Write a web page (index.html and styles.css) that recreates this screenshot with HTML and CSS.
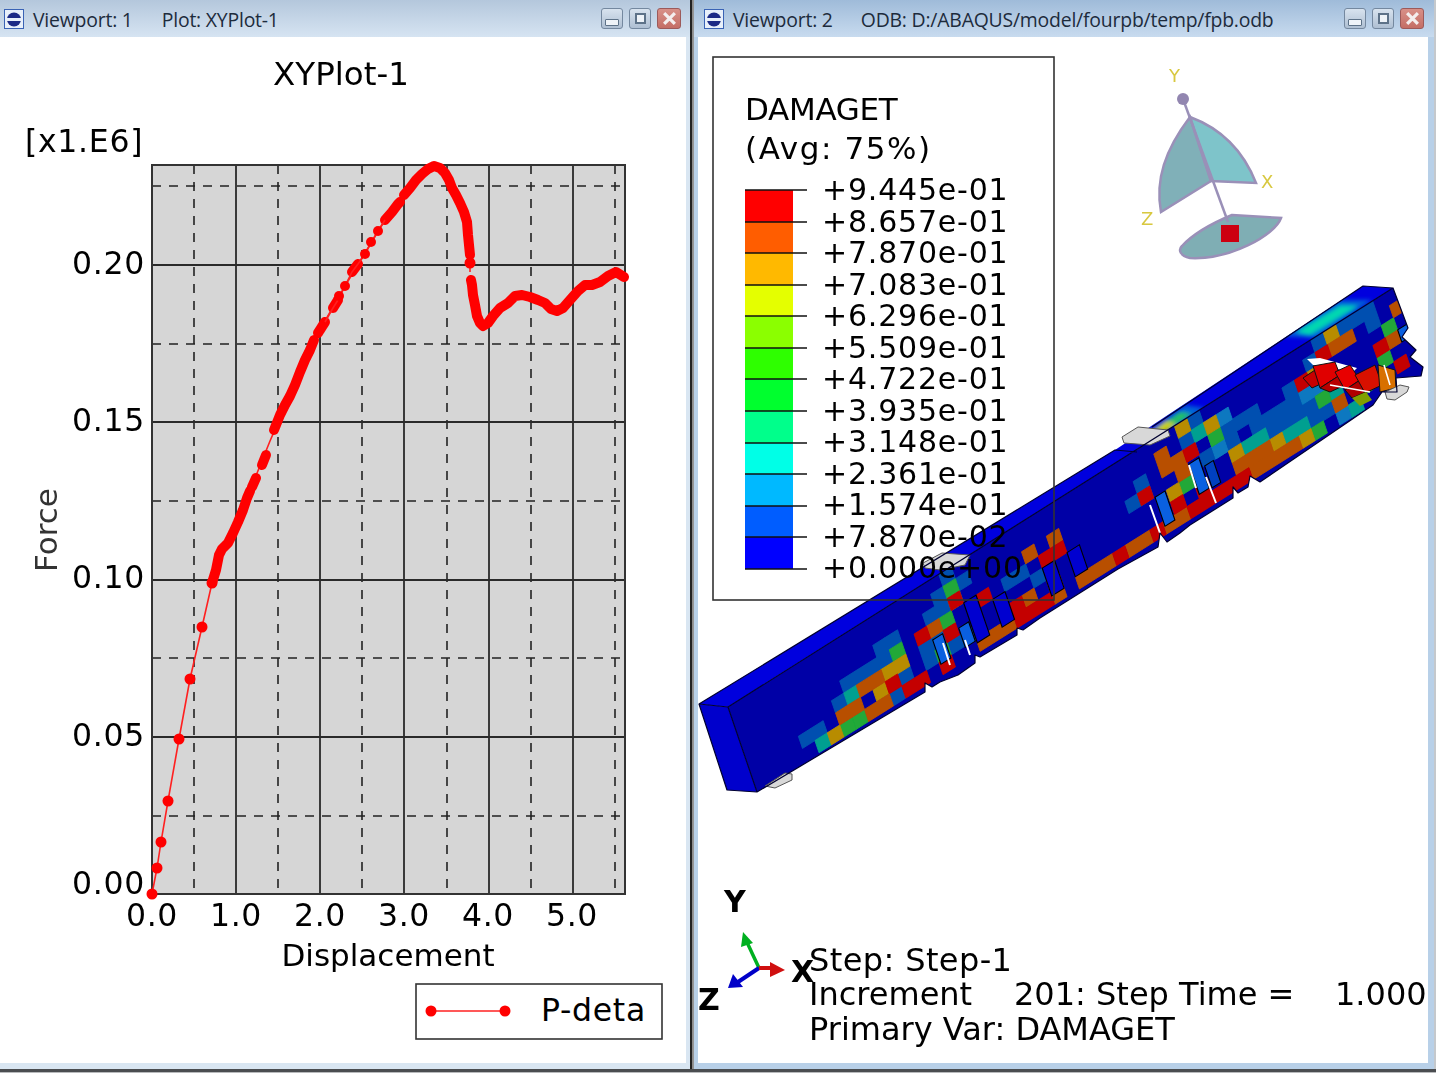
FILE: index.html
```html
<!DOCTYPE html>
<html lang="en">
<head>
<meta charset="utf-8">
<title>Viewports</title>
<link rel="stylesheet" href="styles.css">
</head>
<body>
<main class="desk">
  <section class="win win-one">
    <header class="titlebar">
      <svg class="appicon" viewBox="0 0 20 20"><rect x=".5" y=".5" width="19" height="19" fill="#e8f0fa" stroke="#3a63b5"/><circle cx="10" cy="10.5" r="7" fill="#1c2a86"/><rect x="3" y="9" width="14" height="3" fill="#e8f0fa"/></svg>
      <span class="wintext first">Viewport: 1</span>
      <span class="wintext">Plot: XYPlot-1</span>
      <div class="controls">
        <span class="btn"><i class="glyph-min"></i></span>
        <span class="btn"><i class="glyph-max"></i></span>
        <span class="btn btn-close"><svg viewBox="0 0 14 14"><path d="M2 2L12 12M12 2L2 12" stroke="#f4eeee" stroke-width="3"/></svg></span>
      </div>
    </header>
    <div class="canvas">
      <svg class="scene" viewBox="0 37 686 1026">
        <rect class="plotbg" x="152" y="165" width="473" height="729"/>
        <g class="grid-dash">
          <path d="M194 165V894M278 165V894M362 165V894M447 165V894M531 165V894M615 165V894"/>
          <path d="M152 186H625M152 344H625M152 501H625M152 658H625M152 816H625"/>
        </g>
        <g class="grid-solid">
          <path d="M236 165V894M320 165V894M404 165V894M489 165V894M573 165V894"/>
          <path d="M152 265H625M152 422H625M152 580H625M152 737H625"/>
        </g>
        <rect class="plotframe" x="152" y="165" width="473" height="729"/>
        <polyline class="curve-thin" points="152,894 157,868 161,842 168,801 179,739 190,679 202,627 212,583 216,570 247,498 270,441 314,340 345,286 385,220"/>
        <polyline class="curve-thin" points="470,255 470,272"/>
        <polyline class="curve-thick" points="212,583 216,570 219,555 222,549 228,543 233,533 238,522 243,510 247,498 250,491"/>
        <polyline class="curve-thick" points="252,487 256,478"/>
        <polyline class="curve-thick" points="262,465 266,455"/>
        <polyline class="curve-thick" points="274,430 280,415 285,405 290,396 295,385 300,372 305,360 310,350 314,340"/>
        <polyline class="curve-thick" points="318,333 325,322"/>
        <polyline class="curve-thick" points="333,308 338,300"/>
        <polyline class="curve-thick" points="352,272 358,264"/>
        <polyline class="curve-thick" points="385,220 392,212 398,204 400,202"/>
        <polyline class="curve-thick" points="404,195 410,188 416,180 422,174 428,169 434,166 440,168 445,173 449,180 452,188 456,195 460,203 464,212 467,222 468,235 469,245 470,255"/>
        <polyline class="curve-thick" points="471,280 472,285 473,295 475,305 477,316 480,323 483,326 488,323 493,316 500,308 508,303 515,296 522,295 530,297 538,300 545,303 551,309 557,311 563,308 570,300 578,291 585,285 592,285 600,282 608,276 616,272 624,277"/>
        <polyline class="curve-thin" points="325,322 333,308 338,300 345,286 352,272 358,264 365,254 372,241 378,231 385,220"/>
        <g class="dots">
          <circle cx="152" cy="894" r="5.5"/><circle cx="157" cy="868" r="5.5"/><circle cx="161" cy="842" r="5.5"/><circle cx="168" cy="801" r="5.5"/><circle cx="179" cy="739" r="5.5"/><circle cx="190" cy="679" r="5.5"/><circle cx="202" cy="627" r="5.5"/><circle cx="212" cy="583" r="5.5"/>
          <circle cx="345" cy="286" r="5"/><circle cx="365" cy="254" r="5"/><circle cx="371" cy="242" r="5"/><circle cx="378" cy="231" r="5"/><circle cx="470" cy="263" r="5.5"/><circle cx="339" cy="296" r="5"/>
        </g>
        <text class="t t-title" x="341" y="85" text-anchor="middle">XYPlot-1</text>
        <text class="t t-num" x="25" y="152">[x1.E6]</text>
        <g class="t t-num" text-anchor="end">
          <text x="145" y="274">0.20</text><text x="145" y="431">0.15</text><text x="145" y="588">0.10</text><text x="145" y="746">0.05</text><text x="145" y="894">0.00</text>
        </g>
        <g class="t t-num" text-anchor="middle">
          <text x="152" y="926">0.0</text><text x="236" y="926">1.0</text><text x="320" y="926">2.0</text><text x="404" y="926">3.0</text><text x="488" y="926">4.0</text><text x="572" y="926">5.0</text>
        </g>
        <text class="t t-axis" x="388" y="966" text-anchor="middle">Displacement</text>
        <text class="t t-axis t-grey" transform="translate(57 530) rotate(-90)" text-anchor="middle">Force</text>
        <rect class="legendbox" x="416" y="984" width="246" height="55"/>
        <path class="curve-thin" d="M431 1011H505"/>
        <circle class="dots" cx="431" cy="1011" r="5.5"/><circle class="dots" cx="505" cy="1011" r="5.5"/>
        <text class="t t-num" x="541" y="1021">P-deta</text>
      </svg>
    </div>
  </section>

  <div class="divider"></div>

  <section class="win win-two">
    <header class="titlebar">
      <svg class="appicon" viewBox="0 0 20 20"><rect x=".5" y=".5" width="19" height="19" fill="#e8f0fa" stroke="#3a63b5"/><circle cx="10" cy="10.5" r="7" fill="#1c2a86"/><rect x="3" y="9" width="14" height="3" fill="#e8f0fa"/></svg>
      <span class="wintext first">Viewport: 2</span>
      <span class="wintext">ODB: D:/ABAQUS/model/fourpb/temp/fpb.odb</span>
      <div class="controls">
        <span class="btn"><i class="glyph-min"></i></span>
        <span class="btn"><i class="glyph-max"></i></span>
        <span class="btn btn-close"><svg viewBox="0 0 14 14"><path d="M2 2L12 12M12 2L2 12" stroke="#f4eeee" stroke-width="3"/></svg></span>
      </div>
    </header>
    <div class="canvas">
      <svg class="scene" viewBox="698 37 730 1026">
        <defs>
          <filter id="soft" x="-5%" y="-5%" width="110%" height="110%"><feGaussianBlur stdDeviation=".7"/></filter>
          <filter id="softer" x="-20%" y="-40%" width="140%" height="180%"><feGaussianBlur stdDeviation="2"/></filter>
          <clipPath id="faceclip"><polygon points="728,707 1393,288 1408,328 1402,337 1416,350 1410,357 1423,367 1421,376 1396,378 1397,392 1382,392 1373,405 1260,482 1250,476 1248,487 1238,493 1233,487 1233,498 1190,525 1180,533 1167,542 1160,533 1158,547 1118,569 1040,618 1023,630 1017,628 1017,635 980,657 975,655 975,663 958,675 940,682 932,687 925,683 925,692 757,792"/></clipPath>
          <clipPath id="topclip"><polygon points="699,704 1115,450 1363,286 1393,288 728,707"/></clipPath>
        </defs>
        <!-- beam -->
        <g class="beam">
          <polygon class="face-top" points="699,704 1115,450 1363,286 1393,288 728,707"/>
          <g clip-path="url(#topclip)">
            <g class="soft-more">
              <polygon fill="#0060d8" points="1283,336 1340,300 1372,300 1318,338"/>
              <polygon fill="#00d8b0" points="1296,332 1340,306 1358,306 1310,335"/>
              <polygon fill="#0060d8" points="1150,430 1185,405 1205,408 1176,430"/>
              <polygon fill="#20c060" points="1154,430 1180,412 1192,414 1168,430"/>
              <polygon fill="#c8d000" points="1152,432 1166,421 1176,424 1166,432"/>
            </g>
          </g>
          <polygon class="face-end" points="699,704 728,707 757,792 727,790"/>
          <polygon class="face-front" points="728,707 1393,288 1408,328 1402,337 1416,350 1410,357 1423,367 1421,376 1396,378 1397,392 1382,392 1373,405 1260,482 1250,476 1248,487 1238,493 1233,487 1233,498 1190,525 1180,533 1167,542 1160,533 1158,547 1118,569 1040,618 1023,630 1017,628 1017,635 980,657 975,655 975,663 958,675 940,682 932,687 925,683 925,692 757,792"/>
          <g clip-path="url(#faceclip)">
          <g class="soft-cells">
          <g transform="matrix(12.4 -7.8 4.15 12.1 728 707)">
            <path class="c-u" d="M4 5h1v1h-1zM5 5h1v1h-1zM7 4h1v1h-1zM8 3h1v1h-1zM9 3h1v1h-1zM10 3h1v1h-1zM11 2h1v1h-1zM12 2h1v1h-1zM11 3h1v1h-1zM12 5h1v1h-1zM11 6h1v1h-1zM15 2h1v1h-1zM16 2h1v1h-1zM16 1h1v1h-1zM17 0h1v1h-1zM18 1h1v1h-1zM15 4h1v1h-1zM16 5h1v1h-1zM17 5h1v1h-1zM14 4h1v2h-1zM21 3h2v1h-2zM23 4h1v1h-1zM32 2h1v2h-1zM31 3h1v1h-1zM35 2h2v1h-2zM36 1h3v1h-3zM37 3h3v1h-3zM38 2h2v1h-2zM37 0h1v1h-1zM39 3h1v1h-1zM40 2h2v1h-2zM41 3h2v2h-2zM43 4h4v1h-4zM44 3h2v1h-2zM45 4h1v2h-1zM47 0h2v1h-2zM49 0h2v1h-2zM46 1h1v1h-1zM44 2h1v1h-1zM43 3h2v1h-2zM44 4h3v1h-3zM45 5h2v1h-2zM51 0h1v2h-1z"/>
            <path class="c-l" d="M39 1h1v1h-1zM38 3h1v1h-1zM45 3h1v1h-1zM46 3h1v1h-1zM47 6h1v1h-1z"/>
            <path class="c-t" d="M5 6h1v1h-1zM8 4h1v1h-1zM17 2h1v1h-1zM37 1h1v1h-1zM40 4h1v1h-1zM41 4h1v1h-1zM44 5h1v1h-1zM47 4h1v1h-1zM43 5h1v1h-1zM48 6h1v1h-1z"/>
            <path class="c-g" d="M7 6h1v1h-1zM8 6h1v1h-1zM12 3h1v1h-1zM16 3h1v1h-1zM15 5h1v1h-1zM17 1h1v1h-1zM35 4h1v1h-1zM38 2h1v1h-1zM46 4h1v1h-1zM49 5h1v1h-1zM52 2h1v1h-1zM51 4h1v1h-1zM45 6h1v1h-1z"/>
            <path class="c-o" d="M6 6h1v1h-1zM11 4h1v1h-1zM12 4h1v1h-1zM10 5h1v1h-1zM34 4h1v1h-1zM36 0h1v1h-1zM39 4h1v1h-1zM42 5h1v1h-1zM44 6h1v1h-1zM48 0h1v1h-1zM46 2h1v1h-1zM38 1h1v1h-1z"/>
            <path class="c-b" d="M7 5h1v1h-1zM8 5h1v1h-1zM9 6h2v1h-2zM9 4h1v1h-1zM10 4h1v1h-1zM15 3h1v1h-1zM18 6h3v1h-3zM22 5h1v1h-1zM23 2h1v1h-1zM25 2h1v1h-1zM24 5h1v2h-1zM26 6h3v1h-3zM30 6h2v1h-2zM35 3h1v1h-1zM35 2h1v1h-1zM34 1h1v2h-1zM39 5h1v1h-1zM40 6h4v1h-4zM40 5h2v1h-2zM47 5h1v1h-1zM49 1h1v1h-1zM48 1h1v1h-1zM52 3h1v1h-1zM53 1h1v1h-1zM33 6h2v1h-2z"/>
            <path class="c-r" d="M11 5h1v1h-1zM12 6h2v1h-2zM14 3h1v1h-1zM16 4h1v1h-1zM15 6h1v1h-1zM17 2h1v1h-1zM19 3h1v1h-1zM21 5h1v1h-1zM24 3h1v1h-1zM25 3h1v1h-1zM21 6h3v1h-3zM29 6h1v1h-1zM32 6h1v1h-1zM32 3h1v1h-1zM34 5h1v1h-1zM35 6h4v1h-4zM36 2h1v1h-1zM36 5h1v1h-1zM39 6h1v1h-1zM47 1h1v1h-1zM45 2h1v1h-1zM51 3h1v1h-1zM52 5h1v1h-1z"/>
          </g>
          </g>
          <g transform="matrix(12.4 -7.8 4.15 12.1 728 707)">
            <g class="slots">
              <rect x="18" y="3" width="1" height="3.3"/><rect x="20" y="4" width="1" height="2.3"/><rect x="24" y="4" width="1" height="2.3"/><rect x="26" y="4" width="1" height="2"/>
              <rect x="15.1" y="4.2" width=".8" height="2" class="slot-light"/><rect x="17.1" y="4.5" width=".8" height="1.6" class="slot-light"/>
              <rect x="33.1" y="4" width=".8" height="2.4" class="slot-light"/><rect x="36.1" y="3.2" width=".8" height="2.5" class="slot-light"/><rect x="37.1" y="4" width=".7" height="1.8" class="slot-dark"/>
              <rect x="53" y="3" width="1" height="1" class="slot-light"/>
            </g>
          </g>
          </g>
          <path class="crackline" d="M1150 505L1160 533M1206 477L1216 503M1189 465L1196 488M943 643L950 665M965 640L970 655"/>
          <polygon class="hole" points="1307,359 1320,358 1357,368 1353,372 1313,365"/>
          <polygon class="block" fill="#c80000" points="1303,378 1318,368 1325,382 1312,388"/>
          <polygon class="block" fill="#e00000" points="1313,366 1335,362 1340,375 1320,388"/>
          <polygon class="block" fill="#b80000" points="1320,388 1340,375 1345,385 1330,392"/>
          <polygon class="block" fill="#e80000" points="1335,372 1350,365 1360,380 1345,390"/>
          <polygon class="block" fill="#b00000" points="1345,390 1360,380 1366,392 1352,398"/>
          <polygon class="block" fill="#d81000" points="1355,375 1375,365 1382,385 1365,393"/>
          <polygon class="block" fill="#d87000" points="1378,365 1395,370 1396,388 1380,392"/>
          <polygon fill="#80a000" points="1352,398 1366,392 1372,400 1360,406"/>
          <path class="crackwhite" d="M1330 385L1370 392M1384 365L1390 385"/>
          <polygon class="plate-top" points="923,563 942,553 970,555 965,565 940,570 925,568"/>
          <polygon class="plate-top" points="1122,437 1138,427 1168,430 1170,436 1150,445 1124,443"/>
          <polygon class="plate-top" points="1385,392 1400,385 1409,387 1407,392 1395,400 1387,399"/>
          <polygon class="plate-top" points="765,786 785,773 792,774 792,780 775,788"/>
          <path class="edge" d="M699 704L728 707L757 792L727 790ZM699 704L1115 450L1137 452M1152 427L1363 286L1393 288L728 707M1393 288L1408 328L1402 337L1416 350L1410 357L1423 367L1421 376L1396 378L1397 392L1382 392L1373 405L1260 482L1250 476L1248 487L1238 493L1233 487L1233 498L1190 525L1180 533L1167 542L1160 533L1158 547L1118 569L1040 618L1023 630L1017 628L1017 635L980 657L975 655L975 663L958 675L940 682L932 687L925 683L925 692L757 792"/>
        </g>
        <!-- legend -->
        <rect class="legendbox legend-open" x="713" y="57" width="341" height="543"/>
        <text class="t t-leg" x="745" y="120">DAMAGET</text>
        <text class="t t-leg t-leg-wide" x="745" y="159">(Avg: 75%)</text>
        <g class="bar">
          <rect x="745" y="190" width="48" height="32" fill="#ff0000"/>
          <rect x="745" y="222" width="48" height="31" fill="#ff5d00"/>
          <rect x="745" y="253" width="48" height="32" fill="#ffb900"/>
          <rect x="745" y="285" width="48" height="31" fill="#e4ff00"/>
          <rect x="745" y="316" width="48" height="32" fill="#8bff00"/>
          <rect x="745" y="348" width="48" height="31" fill="#2eff00"/>
          <rect x="745" y="379" width="48" height="32" fill="#00ff2e"/>
          <rect x="745" y="411" width="48" height="32" fill="#00ff8b"/>
          <rect x="745" y="443" width="48" height="31" fill="#00ffe7"/>
          <rect x="745" y="474" width="48" height="32" fill="#00b9ff"/>
          <rect x="745" y="506" width="48" height="31" fill="#005dff"/>
          <rect x="745" y="537" width="48" height="32" fill="#0000ff"/>
          <path class="ticks" d="M745 190H807M745 222H807M745 253H807M745 285H807M745 316H807M745 348H807M745 379H807M745 411H807M745 443H807M745 474H807M745 506H807M745 537H807M745 569H807"/>
        </g>
        <g class="t t-val">
          <text x="822" y="200">+9.445e-01</text><text x="822" y="232">+8.657e-01</text><text x="822" y="263">+7.870e-01</text><text x="822" y="295">+7.083e-01</text><text x="822" y="326">+6.296e-01</text><text x="822" y="358">+5.509e-01</text><text x="822" y="389">+4.722e-01</text><text x="822" y="421">+3.935e-01</text><text x="822" y="452">+3.148e-01</text><text x="822" y="484">+2.361e-01</text><text x="822" y="515">+1.574e-01</text><text x="822" y="547">+7.870e-02</text><text x="822" y="578">+0.000e+00</text>
        </g>
        <!-- view cube compass -->
        <g class="compass">
          <path class="sail-a" d="M1190 117C1165 150 1155 180 1161 212L1211 181Z"/>
          <path class="sail-b" d="M1190 117C1225 130 1245 155 1256 183L1211 181Z"/>
          <path class="sail-c" d="M1232 215L1281 218C1275 235 1230 260 1190 258C1180 256 1178 250 1182 246C1195 232 1215 222 1232 215Z"/>
          <path class="mast" d="M1183 99L1228 222"/>
          <circle class="knob" cx="1183" cy="99" r="6"/>
          <rect class="cube-red" x="1221" y="225" width="18" height="17"/>
        </g>
        <g class="t t-comp"><text x="1169" y="82">Y</text><text x="1261" y="188">X</text><text x="1141" y="225">Z</text></g>
        <!-- triad -->
        <g class="triad">
          <path class="ax-g" d="M759 968L745 938"/><polygon class="ax-gh" points="743,932 753,943 741,947"/>
          <path class="ax-b" d="M759 968L735 984"/><polygon class="ax-bh" points="728,988 743,987 733,974"/>
          <path class="ax-r" d="M759 968H776"/><polygon class="ax-rh" points="770,962 785,970 770,977"/>
        </g>
        <g class="t t-triad"><text x="724" y="912">Y</text><text x="791" y="982">X</text><text x="698" y="1010">Z</text></g>
        <g class="t t-info">
          <text class="wider" x="809" y="971">Step: Step-1</text>
          <text x="809" y="1005">Increment</text><text x="1014" y="1005">201: Step Time =</text><text x="1335" y="1005">1.000</text>
          <text x="809" y="1040">Primary Var: DAMAGET</text>
        </g>
      </svg>
    </div>
  </section>
</main>
</body>
</html>
```
FILE: styles.css
```css
* { box-sizing: border-box; }
html, body { margin: 0; padding: 0; height: 100%; background: #c4c8cc; overflow: hidden; }
.desk { display: flex; height: 1073px; padding-bottom: 4px; background: linear-gradient(to top, #b8babc 0, #b8babc 1px, #4a4d50 1px, #4a4d50 4px, transparent 4px); }
.win { display: flex; flex-direction: column; }
.win-one { width: 690px; background: #d9e6f2; padding: 0 4px 6px 0; }
.win-two { flex: 1; background: #b8d0e8; padding: 0 6px 6px 4px; margin-right: 2px; }
.divider { width: 4px; background: linear-gradient(to right, #222 0, #222 2px, #888 2px, #9a9a9a 4px); }
.titlebar { display: flex; align-items: center; flex: none; height: 37px; padding-left: 4px; padding-top: 3px; font-family: "Open Sans", "Noto Sans", sans-serif; }
.win-one .titlebar { background: linear-gradient(#b4c7dc, #d6e4f2); margin-right: -4px; padding-right: 9px; }
.win-two .titlebar { background: linear-gradient(#9fbbd9, #c8dbef); margin: 0 -6px 0 -4px; padding-left: 10px; padding-right: 10px; }
.appicon { width: 20px; height: 20px; flex: none; margin-right: 9px; margin-top: -3px; }
.wintext { font-size: 19.4px; color: #1d2b3c; letter-spacing: -.2px; white-space: nowrap; margin-top: -2px; }
.wintext.first { margin-right: 29px; }
.win-two .wintext.first { margin-right: 28px; }
.controls { display: flex; gap: 6px; margin-left: auto; margin-top: -3px; }
.btn { display: flex; align-items: center; justify-content: center; width: 22px; height: 21px; border: 1px solid #74889f; border-radius: 3px; background: linear-gradient(#d8e3ef, #aebfd2); }
.btn-close { width: 24px; background: linear-gradient(#d89088, #c46e66); border-color: #9c5a5a; }
.btn-close svg { width: 15px; height: 15px; }
.glyph-min { display: block; width: 14px; height: 7px; margin-top: 7px; border: 1px solid #5d7288; background: #eef3f8; border-radius: 1px; }
.glyph-max { display: block; width: 11px; height: 11px; border: 2px solid #5d7288; background: #eef3f8; }
.canvas { flex: 1; background: #fff; min-height: 0; }
.scene { display: block; width: 100%; height: 100%; filter: blur(.45px); }

.plotbg { fill: #d6d6d6; }
.grid-dash path { fill: none; stroke: #222; stroke-width: 1.6; stroke-dasharray: 9 8; }
.grid-solid path { fill: none; stroke: #2a2a2a; stroke-width: 1.8; }
.plotframe { fill: none; stroke: #333; stroke-width: 2; }
.curve-thin { fill: none; stroke: #ff2020; stroke-width: 1.6; }
.curve-thick { fill: none; stroke: #ff0000; stroke-width: 10; stroke-linejoin: round; stroke-linecap: round; }
.dots { fill: #ff0000; }
.t { font-family: "DejaVu Sans", sans-serif; fill: #000; }
.t-title { font-size: 32.5px; }
.t-axis { font-size: 31px; }
.t-num { font-size: 31.5px; letter-spacing: .7px; }
.t-grey { fill: #333; }
.legendbox { fill: #fff; stroke: #333; stroke-width: 1.6; }
.legend-open { fill: none; }
.t-leg { font-size: 31px; letter-spacing: -.3px; }
.t-leg-wide { letter-spacing: 1.6px; }
.t-val { font-size: 30px; letter-spacing: .8px; }
.ticks { fill: none; stroke: #111; stroke-width: 1.3; }
.bar rect { stroke: none; }
.t-info { font-size: 32px; }
.wider { letter-spacing: .4px; }

.face-top { fill: #0000de; }
.face-end { fill: #0000cc; }
.face-front { fill: #0000a6; }
.soft-cells { filter: url(#soft); }
.soft-more { filter: url(#softer); }
.beam g path { stroke-width: .06; }
.c-u { fill: #0050b0; stroke: #0050b0; }
.c-l { fill: #0a78c0; stroke: #0a78c0; }
.c-t { fill: #00a090; stroke: #00a090; }
.c-g { fill: #20a838; stroke: #20a838; }
.c-o { fill: #b88c00; stroke: #b88c00; }
.c-b { fill: #b85000; stroke: #b85000; }
.c-r { fill: #c40000; stroke: #c40000; }
.slots rect { fill: #0000d0; stroke: #000; stroke-width: .08; }
.slots .slot-light { fill: #0a60e0; }
.slots .slot-dark { fill: #0040c0; }
.crackline { fill: none; stroke: #fff; stroke-width: 2; }
.crackwhite { fill: none; stroke: #fff; stroke-width: 1.6; }
.hole { fill: #fff; }
.block { stroke: #111; stroke-width: 1; }
.plate-top { fill: #d8d8d8; stroke: #555; stroke-width: 1; }
.edge { fill: none; stroke: #000030; stroke-width: 1.2; stroke-linejoin: round; }

.sail-a { fill: #80b0b8; stroke: #9a90b8; stroke-width: 2.5; }
.sail-b { fill: #7ec4ca; stroke: #9a90b8; stroke-width: 2.5; }
.sail-c { fill: #7faeb4; stroke: #9a90b8; stroke-width: 2.5; }
.mast { fill: none; stroke: #9a90b8; stroke-width: 2.5; }
.knob { fill: #9286b0; }
.cube-red { fill: #cc0010; }
.t-comp { font-size: 18px; fill: #d8c840; }
.ax-g { stroke: #00b020; stroke-width: 3.5; }
.ax-gh { fill: #00b020; }
.ax-b { stroke: #0000c8; stroke-width: 4; }
.ax-bh { fill: #0000c8; }
.ax-r { stroke: #d01010; stroke-width: 4; }
.ax-rh { fill: #d01010; }
.t-triad { font-size: 30px; font-weight: 700; }
```
